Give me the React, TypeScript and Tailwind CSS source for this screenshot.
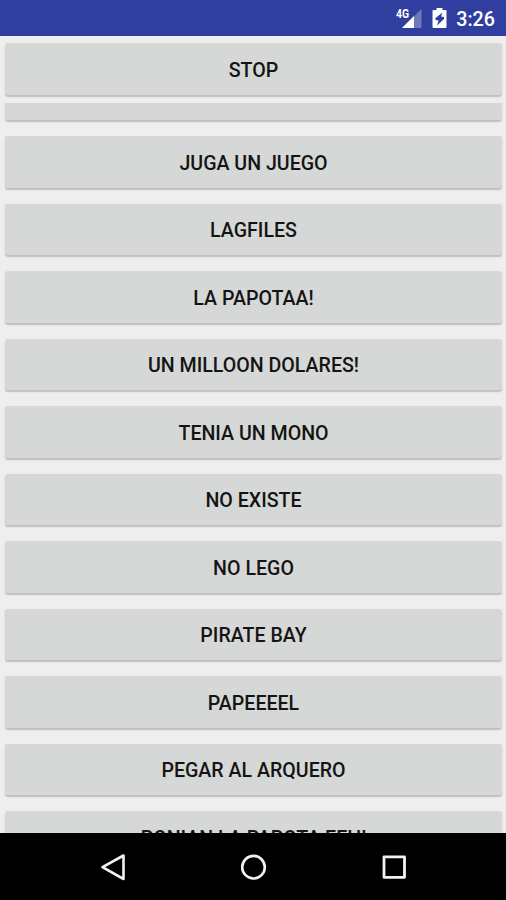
import React from 'react';

interface SoundButtonProps {
  label?: string;
}

const sounds = [
  'Juga un juego',
  'Lagfiles',
  'La papotaa!',
  'Un milloon dolares!',
  'Tenia un mono',
  'No existe',
  'No lego',
  'Pirate bay',
  'Papeeeel',
  'Pegar al arquero',
  'Ponian la papota eeh!',
];

function SoundButton({ label }: SoundButtonProps) {
  return (
    <button className="flex h-[51.5px] w-full shrink-0 items-center justify-center rounded-[3px] bg-[#d6d8d7] pt-[4px] text-[19.6px] leading-none font-medium text-[#141414] uppercase shadow-[0_1.5px_1.5px_rgba(0,0,0,0.2)]">
      {label}
    </button>
  );
}

function StatusBar() {
  return (
    <div className="flex h-[36px] shrink-0 items-center justify-end bg-[#303f9f] pr-[11px] text-white">
      <svg width="27" height="24" viewBox="0 0 27 24" className="mr-[10px]">
        <path d="M26.500 3v19H7z" fill="#fff" fillOpacity="0.3" />
        <path d="M19 10v12H7z" fill="#fff" />
        <text x="1" y="11.5" fontSize="12.500" fontWeight="700" fill="#fff" textLength="13" lengthAdjust="spacingAndGlyphs">
          4G
        </text>
      </svg>
      <svg width="15" height="22" viewBox="0 0 15 22" className="mr-[9px]">
        <path d="M4.500 1h6v2h3q1 0 1 1v16q0 1-1 1h-12q-1 0-1-1V4q0-1 1-1h3z" fill="#fff" />
        <path d="M10.500 5.500L3.500 11v2l3 .5-1.500 5 7-6.500v-2l-3-.5z" fill="#303f9f" />
      </svg>
      <span className="pt-[3px] text-[19.7px] leading-none font-medium">3:26</span>
    </div>
  );
}

function NavigationBar() {
  return (
    <div className="flex h-[67px] shrink-0 items-center justify-between bg-black px-[98px]">
      <svg width="30" height="30" viewBox="0 0 30 30" fill="none" stroke="#f2f2f2" strokeWidth="2.6" strokeLinejoin="round">
        <path d="M25.500 3.500v23.500L4.500 15.200z" />
      </svg>
      <svg width="30" height="30" viewBox="0 0 30 30" fill="none" stroke="#f2f2f2" strokeWidth="2.6">
        <circle cx="15.500" cy="15.200" r="11.300" />
      </svg>
      <svg width="30" height="30" viewBox="0 0 30 30" fill="none" stroke="#f2f2f2" strokeWidth="2.8" strokeLinejoin="round">
        <rect x="6" y="4.800" width="20.500" height="20.500" />
      </svg>
    </div>
  );
}

export default function App() {
  return (
    <div className="flex h-[900px] w-[506px] flex-col overflow-hidden bg-[#eeeeee] font-['Roboto','Liberation_Sans',sans-serif]">
      <StatusBar />
      <div className="shrink-0 pt-[7px] pr-[4px] pb-[8.500px] pl-[5px]">
        <SoundButton label="Stop" />
      </div>

      {/* Scrolled list, the first row is mostly above its top edge */}
      <div className="flex min-h-0 flex-1 flex-col overflow-hidden pr-[4px] pl-[5px]">
        <div className="-mt-[34.500px] flex flex-col gap-[16px]">
          <SoundButton />
          {sounds.map((sound) => (
            <SoundButton key={sound} label={sound} />
          ))}
        </div>
      </div>

      <NavigationBar />
    </div>
  );
}
